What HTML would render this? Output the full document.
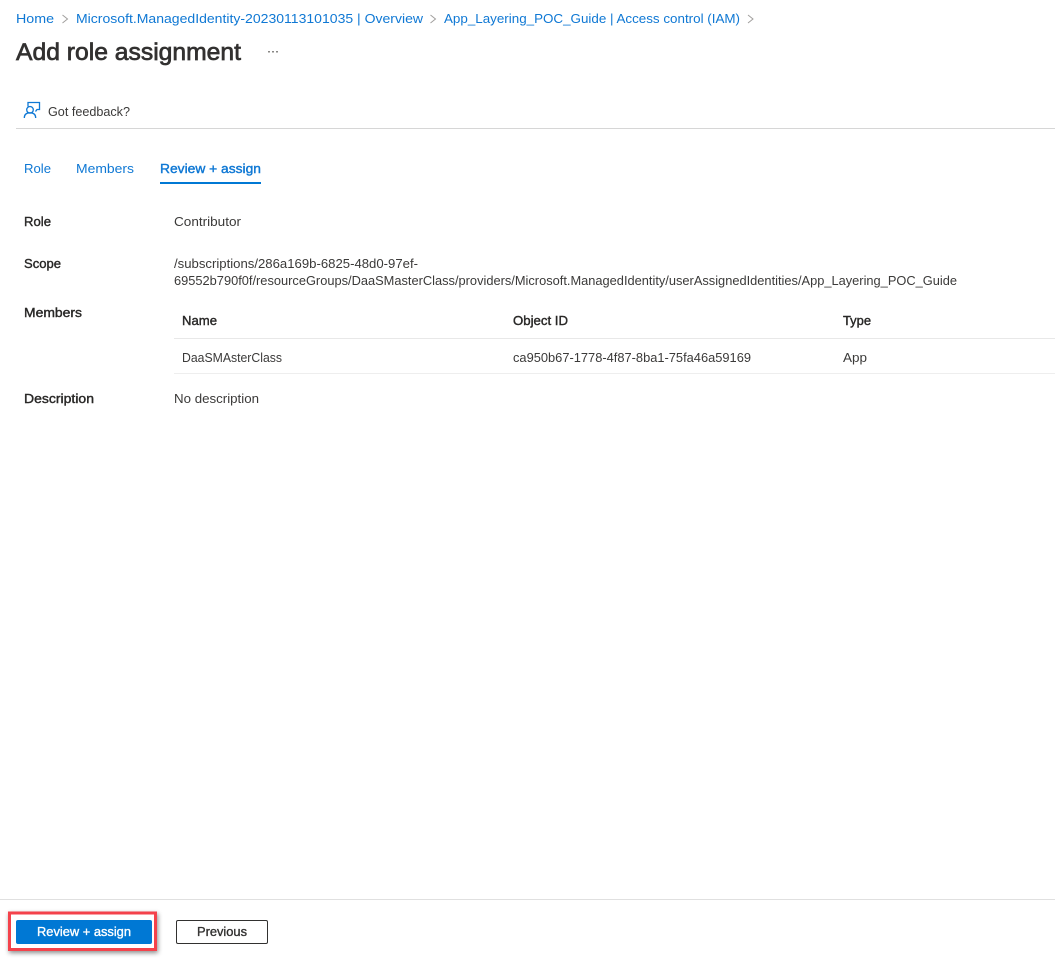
<!DOCTYPE html>
<html lang="en">
<head>
<meta charset="utf-8">
<title>Add role assignment</title>
<style>
html,body{margin:0;padding:0;width:1055px;height:959px;background:#fff;overflow:hidden}
svg{display:block;position:absolute;left:0;top:0}
text{font-family:"Liberation Sans",sans-serif;font-size:13px;fill:#3b3a39}
.l{fill:#0f78d4}
.b{fill:#292827;stroke:#292827;stroke-width:.4px}
</style>
</head>
<body>
<svg width="1055" height="959" viewBox="0 0 1055 959" xmlns="http://www.w3.org/2000/svg">
<rect width="1055" height="959" fill="#fff"/>

<text class="l" x="16" y="23" textLength="38" lengthAdjust="spacingAndGlyphs">Home</text>
<path d="M62.500 15l5 4-5 4" fill="none" stroke="#a19f9d" stroke-width="1"/>
<text class="l" x="76" y="23" textLength="347" lengthAdjust="spacingAndGlyphs">Microsoft.ManagedIdentity-20230113101035 | Overview</text>
<path d="M430.500 15l5 4-5 4" fill="none" stroke="#a19f9d" stroke-width="1"/>
<text class="l" x="444" y="23" textLength="296" lengthAdjust="spacingAndGlyphs">App_Layering_POC_Guide | Access control (IAM)</text>
<path d="M748 15l5 4-5 4" fill="none" stroke="#a19f9d" stroke-width="1"/>

<text x="16" y="60" textLength="225" lengthAdjust="spacingAndGlyphs" style="font-size:24px;fill:#323130;stroke:#323130;stroke-width:.7px">Add role assignment</text>
<g fill="#8a8886"><rect x="268" y="51" width="2" height="1.500"/><rect x="272" y="51" width="2" height="1.500"/><rect x="276" y="51" width="2" height="1.500"/></g>

<g fill="none" stroke="#0f78d4" stroke-width="1.300">
<path d="M28 106.500V102.500H39.500V109.500H37L35.500 111.500"/>
<circle cx="30" cy="109.800" r="3.300"/>
<path d="M24.300 118c0-3.800 2.400-5.200 5.700-5.200s5.700 1.400 5.700 5.200"/>
</g>
<text x="48" y="116" textLength="82" lengthAdjust="spacingAndGlyphs">Got feedback?</text>
<rect x="16" y="128" width="1039" height="1" fill="#d6d6d6"/>

<text class="l" x="24" y="173" textLength="27" lengthAdjust="spacingAndGlyphs">Role</text>
<text class="l" x="76" y="173" textLength="58" lengthAdjust="spacingAndGlyphs">Members</text>
<text class="l" x="160" y="173" textLength="101" lengthAdjust="spacingAndGlyphs" style="stroke:#0f78d4;stroke-width:.4px">Review + assign</text>
<rect x="160" y="182" width="101" height="2" fill="#0078d4"/>

<text class="b" x="24" y="226" textLength="27" lengthAdjust="spacingAndGlyphs">Role</text>
<text x="174" y="226" textLength="67" lengthAdjust="spacingAndGlyphs">Contributor</text>

<text class="b" x="24" y="268" textLength="37" lengthAdjust="spacingAndGlyphs">Scope</text>
<text x="174" y="268" textLength="244" lengthAdjust="spacingAndGlyphs">/subscriptions/286a169b-6825-48d0-97ef-</text>
<text x="174" y="285" textLength="783" lengthAdjust="spacingAndGlyphs">69552b790f0f/resourceGroups/DaaSMasterClass/providers/Microsoft.ManagedIdentity/userAssignedIdentities/App_Layering_POC_Guide</text>

<text class="b" x="24" y="317" textLength="58" lengthAdjust="spacingAndGlyphs">Members</text>
<text class="b" x="182" y="325" textLength="35" lengthAdjust="spacingAndGlyphs">Name</text>
<text class="b" x="513" y="325" textLength="55" lengthAdjust="spacingAndGlyphs">Object ID</text>
<text class="b" x="843" y="325" textLength="28" lengthAdjust="spacingAndGlyphs">Type</text>
<rect x="174" y="338" width="881" height="1" fill="#e8e8e8"/>
<text x="182" y="362" textLength="100" lengthAdjust="spacingAndGlyphs">DaaSMAsterClass</text>
<text x="513" y="362" textLength="238" lengthAdjust="spacingAndGlyphs">ca950b67-1778-4f87-8ba1-75fa46a59169</text>
<text x="843" y="362" textLength="24" lengthAdjust="spacingAndGlyphs">App</text>
<rect x="174" y="373" width="881" height="1" fill="#eeeeee"/>

<text class="b" x="24" y="403" textLength="70" lengthAdjust="spacingAndGlyphs">Description</text>
<text x="174" y="403" textLength="85" lengthAdjust="spacingAndGlyphs">No description</text>

<rect y="899" width="1055" height="1" fill="#e0e0e0"/>

<defs><filter id="s" x="-10%" y="-30%" width="120%" height="170%"><feDropShadow dx="1" dy="2" stdDeviation="2.500" flood-color="#000" flood-opacity=".45"/></filter></defs>
<rect x="9.500" y="913" width="146" height="36.500" fill="#fff" stroke="#f4424b" stroke-width="3" filter="url(#s)"/>
<rect x="16" y="920" width="136" height="24" rx="2" fill="#0078d4"/>
<text x="37" y="936" textLength="94" lengthAdjust="spacingAndGlyphs" style="fill:#fff;stroke:#fff;stroke-width:.35px;font-size:13px">Review + assign</text>
<rect x="176.500" y="920.500" width="91" height="23" rx="1.500" fill="#fff" stroke="#323130"/>
<text x="197" y="936" textLength="50" lengthAdjust="spacingAndGlyphs" style="fill:#323130;stroke:#323130;stroke-width:.35px;font-size:13px">Previous</text>
</svg>
</body>
</html>
